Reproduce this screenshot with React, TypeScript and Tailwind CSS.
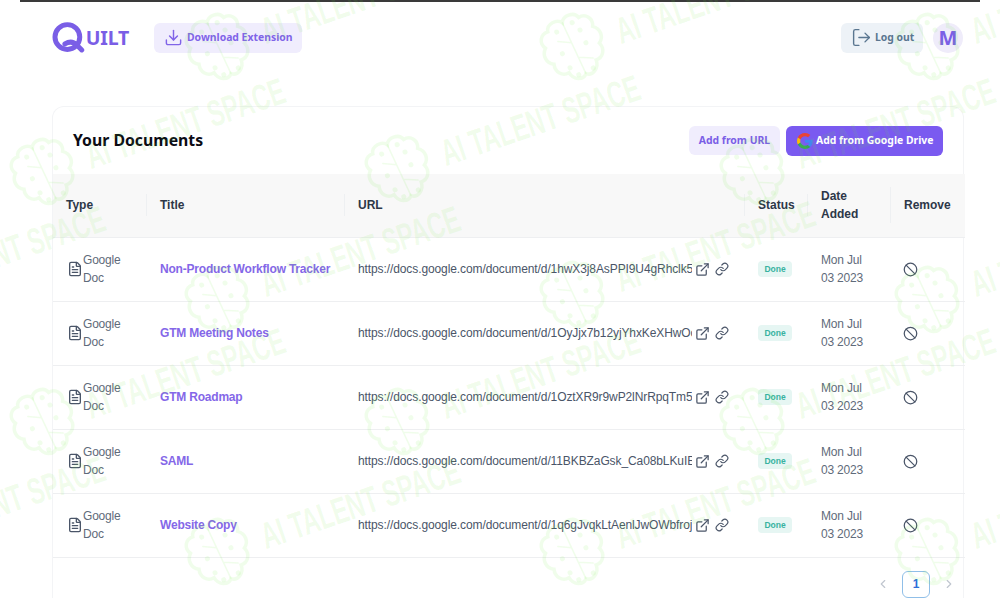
import React from 'react';
import { Ban, Download, ExternalLink, FileText, Link, LogOut, ChevronLeft, ChevronRight } from 'lucide-react';

const docs = [
  { title: 'Non-Product Workflow Tracker', url: 'https://docs.google.com/document/d/1hwX3j8AsPPI9U4gRhclk5c0xT2mQ/edit' },
  { title: 'GTM Meeting Notes', url: 'https://docs.google.com/document/d/1OyJjx7b12yjYhxKeXHwOcL9dPq3R/edit' },
  { title: 'GTM Roadmap', url: 'https://docs.google.com/document/d/1OztXR9r9wP2lNrRpqTm5rV8kEw2Z/edit' },
  { title: 'SAML', url: 'https://docs.google.com/document/d/11BKBZaGsk_Ca08bLKuIBnH4sYt6U/edit' },
  { title: 'Website Copy', url: 'https://docs.google.com/document/d/1q6gJvqkLtAenlJwOWbfrojA7cMx1/edit' },
];

// watermark anchors, brain centre of each stamp
const stamps = [
  [220, 50], [575, 50], [930, 50],
  [45, 175], [400, 172], [755, 175],
  [-135, 303], [220, 303], [575, 298], [930, 303],
  [45, 425], [400, 425], [755, 425],
  [-135, 553], [220, 555], [575, 555], [930, 555],
];

const Brain = () => (
  <svg width="66" height="76" viewBox="0 0 66 76" fill="none" stroke="currentColor" strokeWidth="3.5" strokeLinecap="round">
    <path d="M33 8c3-6 15-6 17 2 8-1 13 7 9 14 6 5 6 14-1 18 3 8-3 15-10 14-1 9-10 13-15 8-5 5-14 1-15-8-7 1-13-6-10-14-7-4-7-13-1-18-4-7 1-15 9-14 2-8 14-8 17-2z" />
    <path d="M33 8v56M33 30l-12-7M33 46l13 7" strokeWidth="1.5" />
    <g fill="currentColor" stroke="none">
      <circle cx="20" cy="36" r="2.500" /><circle cx="46" cy="36" r="2.500" /><circle cx="21" cy="52" r="2.500" /><circle cx="46" cy="22" r="2.500" />
      <circle cx="24" cy="14" r="2.500" /><circle cx="42" cy="12" r="2.500" /><circle cx="26" cy="62" r="2.500" /><circle cx="42" cy="62" r="2.500" />
    </g>
  </svg>
);

const Watermark = () => (
  <div className="absolute inset-0 overflow-hidden pointer-events-none text-[#6fe83c]/10 z-10">
    {stamps.map(([x, y]) => (
      <div key={`${x}-${y}`} className="absolute w-0 h-0" style={{ left: x, top: y }}>
        <div className="absolute -left-[33px] -top-[38px] -rotate-[25deg]">
          <Brain />
        </div>
        <div className="absolute left-[42px] -top-[37px] w-[330px] text-[37px] leading-[40px] font-bold whitespace-nowrap font-['Liberation_Sans',sans-serif] origin-left -rotate-[19deg] scale-x-[0.64]">
          AI TALENT SPACE
        </div>
      </div>
    ))}
  </div>
);

const GoogleIcon = () => (
  <svg width="16" height="16" viewBox="0 0 48 48">
    <path fill="#EA4335" d="M24 9.5c3.5 0 6.6 1.2 9.1 3.6l6.8-6.8C35.8 2.5 30.4 0 24 0 14.6 0 6.5 5.4 2.6 13.2l7.9 6.1C12.4 13.6 17.700 9.500 24 9.500z" />
    <path fill="#4285F4" d="M47 24.500c0-1.600-.1-3.100-.4-4.500H24v9h12.900c-.6 3-2.200 5.400-4.700 7.100l7.300 5.700C43.800 37.800 47 31.700 47 24.500z" />
    <path fill="#FBBC05" d="M10.500 28.700c-.5-1.500-.8-3-.8-4.700s.3-3.200.8-4.700l-7.900-6.100C1 16.400 0 20.100 0 24s1 7.600 2.600 10.800l7.900-6.100z" />
    <path fill="#34A853" d="M24 48c6.500 0 11.900-2.100 15.900-5.800l-7.700-6c-2.100 1.400-4.900 2.300-8.200 2.300-6.300 0-11.600-4.100-13.500-9.800l-7.900 6.100C6.500 42.600 14.600 48 24 48z" />
  </svg>
);

const Logo = () => (
  <div className="flex items-center w-[77px] text-[#7a5ee6]">
    <svg width="35" height="31" viewBox="0 0 35 31" fill="none" stroke="currentColor" strokeWidth="5" strokeLinecap="round">
      <circle cx="15.500" cy="15" r="12.500" />
      <path d="M13 22c5-3 9-2 12 1l5 5" />
    </svg>
    <span className="ml-[-1px] text-[19.500px] leading-none font-bold tracking-[-0.2px] font-['Noto_Sans',sans-serif]">UILT</span>
  </div>
);

const headers = ['Type', 'Title', 'URL', 'Status', 'Date Added', 'Remove'];

export default function App() {
  return (
    <div className="relative w-[1000px] h-[600px] overflow-hidden bg-white font-['Liberation_Sans',sans-serif]">
      <div className="mx-5 h-[2px] bg-[#3a3a3a]" />
      <div className="flex items-center justify-between pl-[52px] pr-[37px] pt-5">
        <div className="flex items-center gap-[25px]">
          <Logo />
          <button className="flex items-center gap-[4px] h-[30px] w-[148px] pl-[10px] rounded-md bg-[#f0edfd] text-[#8064e8] text-[10.400px] font-bold font-['Noto_Sans',sans-serif]">
            <Download size={19} strokeWidth={1.8} />
            Download Extension
          </button>
        </div>
        <div className="flex items-center gap-[10px]">
          <button className="flex items-center gap-[3px] h-[30px] w-[82px] pl-[10px] rounded-md bg-[#edf2f7] text-[#5a7690] text-[10.400px] font-bold font-['Noto_Sans',sans-serif]">
            <LogOut size={21} strokeWidth={1.6} />
            Log out
          </button>
          <div className="flex items-center justify-center w-[30px] h-[30px] rounded-full bg-[#efecfa] text-[#7a5ee6] text-[20px] font-bold font-['Noto_Sans',sans-serif]">M</div>
        </div>
      </div>

      <div className="ml-[52px] mt-[53px] w-[912px] rounded-t-xl border border-b-0 border-[#f3f4f6]">
        <div className="flex items-center justify-between h-[67px] pl-5 pr-5">
          <h2 className="text-[15.800px] font-bold text-[#0b0b14] font-['Noto_Sans',sans-serif]">Your Documents</h2>
          <div className="flex items-center gap-[6px]">
            <button className="h-[29px] w-[91px] rounded-md bg-[#f0edfd] text-[#7a5ee6] text-[10.400px] font-bold font-['Noto_Sans',sans-serif]">Add from URL</button>
            <button className="flex items-center gap-[3px] h-[30px] w-[157px] pl-[11px] rounded-md bg-[#7a5af0] text-white text-[10.400px] font-bold font-['Noto_Sans',sans-serif]">
              <GoogleIcon />
              Add from Google Drive
            </button>
          </div>
        </div>

        <table className="w-full table-fixed border-collapse text-[12px]">
          <colgroup>
            <col className="w-[94px]" />
            <col className="w-[198px]" />
            <col className="w-[400px]" />
            <col className="w-[63px]" />
            <col className="w-[83px]" />
            <col className="w-[74px]" />
          </colgroup>
          <thead>
            <tr className="h-[63px] bg-[#f8f8f8] border-b border-[#eeeff1]">
              {headers.map((h, i) => (
                <th key={h} className="p-0 text-left font-bold text-[#2d3748] leading-[18px]">
                  <div className={`flex items-center min-h-[22px] pl-[13px] ${i < 5 ? 'border-r border-[#eef0f2]' : ''}`}>
                    <span className={h === 'Date Added' ? 'w-[40px]' : ''}>{h}</span>
                  </div>
                </th>
              ))}
            </tr>
          </thead>
          <tbody>
            {docs.map(d => (
              <tr key={d.title} className="h-[64px] border-b border-[#eeeff1] text-[#4a5568]">
                <td className="p-0 pl-[14px]">
                  <div className="flex items-center leading-[18px] text-[#5f6b7a] tracking-[-0.2px]">
                    <FileText size={16} strokeWidth={2} className="shrink-0 text-[#4a5568]" />
                    <span className="w-[45px]">Google Doc</span>
                  </div>
                </td>
                <td className="p-0 pl-[13px] font-bold text-[#8467e8] tracking-[-0.2px] whitespace-nowrap">{d.title}</td>
                <td className="p-0 pl-[13px]">
                  <div className="flex items-center">
                    <span className="w-[334px] overflow-hidden whitespace-nowrap tracking-[-0.1px]">{d.url}</span>
                    <ExternalLink size={15} className="ml-[3px] text-[#4a5568]" />
                    <Link size={14} className="ml-[5px] text-[#4a5568]" />
                  </div>
                </td>
                <td className="p-0 pl-[13px]">
                  <span className="block w-[34px] h-[16px] rounded-sm bg-[#e6f6f3] text-center text-[8.500px] leading-[16px] font-bold text-[#38b2a0]">Done</span>
                </td>
                <td className="p-0 pl-[13px] leading-[18px] text-[#5f6b7a] tracking-[-0.2px]">
                  <div className="w-[50px]">Mon Jul 03 2023</div>
                </td>
                <td className="p-0 pl-[12px]">
                  <Ban size={15} strokeWidth={2} className="text-[#4a5568]" />
                </td>
              </tr>
            ))}
          </tbody>
        </table>

        <div className="flex items-center justify-end gap-3 pt-[13px] pr-[7px]">
          <ChevronLeft size={14} className="text-[#c0c6cf]" />
          <div className="flex items-center justify-center w-[28px] h-[27px] rounded-md border border-[#90bfe8] text-[#2f6fd8] text-[12px] font-bold">1</div>
          <ChevronRight size={14} className="text-[#c0c6cf]" />
        </div>
      </div>

      <Watermark />
    </div>
  );
}
